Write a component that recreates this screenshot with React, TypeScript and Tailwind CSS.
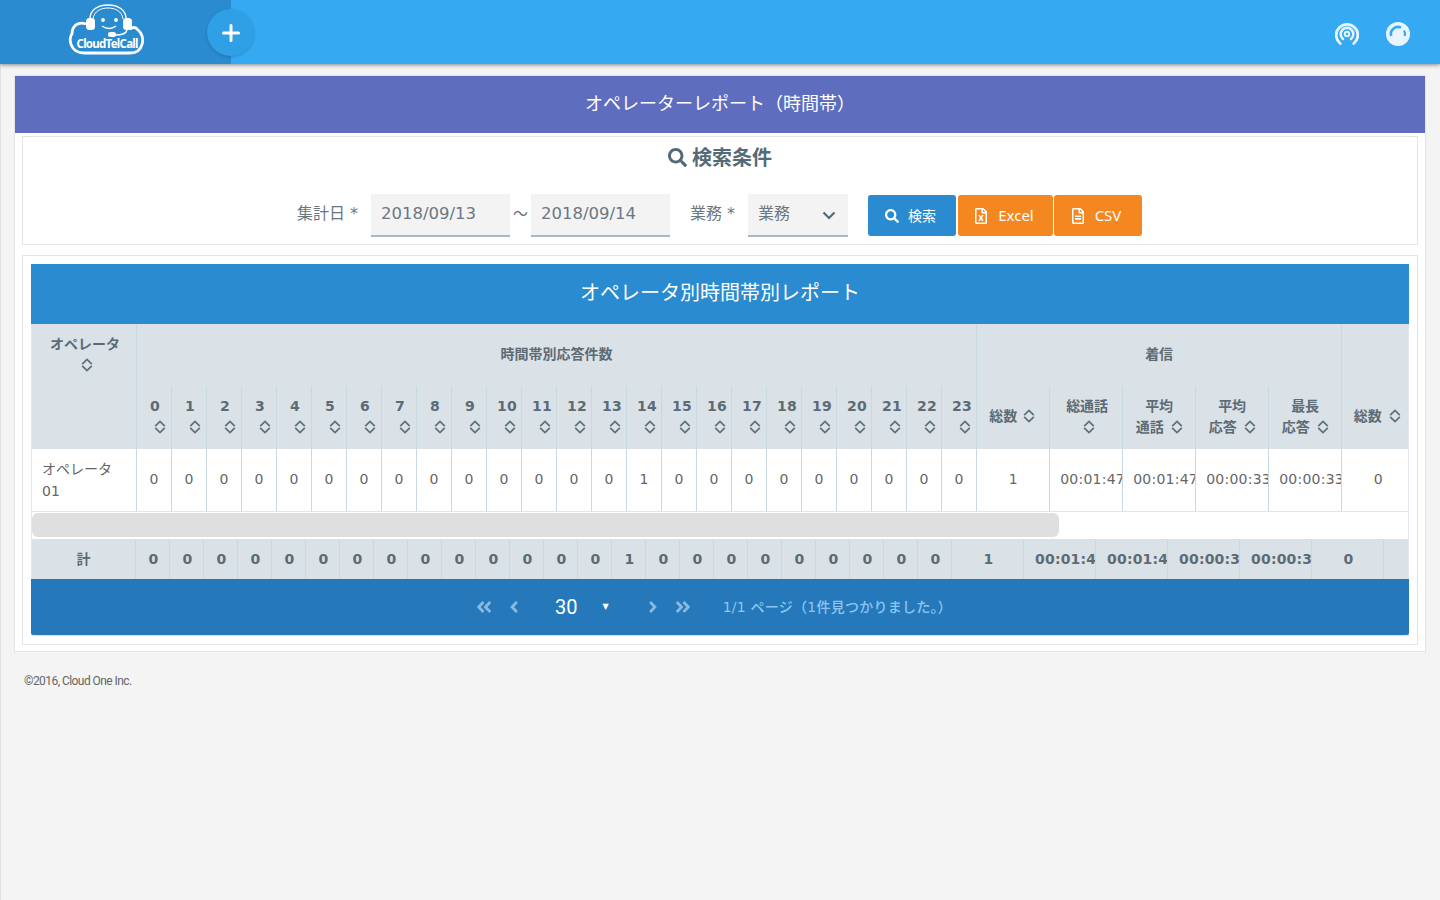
import React from 'react';
import { FaSearch, FaRegFileExcel, FaRegFileAlt, FaAngleDoubleLeft, FaAngleLeft, FaAngleRight, FaAngleDoubleRight } from 'react-icons/fa';

const cjk = "[font-family:'DejaVu_Sans','Noto_Sans_CJK_JP',sans-serif]";

function Sort({ className = '' }: { className?: string }) {
  return (
    <svg viewBox="0 0 12 14" className={`inline-block w-[12px] h-[14px] align-[-2px] ${className}`} fill="none" stroke="#5e707c" strokeWidth="1.8">
      <path d="M1.2 6.2 L6 1.4 L10.8 6.2" />
      <path d="M1.2 7.8 L6 12.6 L10.8 7.8" />
    </svg>
  );
}

function Logo() {
  return (
    <svg viewBox="0 0 86 60" className="w-[86px] h-[60px]" fill="none">
      <path d="M22 24 C14 21 8 26 8 34 C4 38 6 53 20 53 L66 53 C80 53 82 36 74 30 C72 27 69 27 66 29" stroke="#fff" strokeWidth="2.8" />
      <path d="M26 19 C26 9 35 5 44 5 C53 5 62 9 62 19" stroke="#fff" strokeWidth="1.5" />
      <path d="M29 19 C30 11 37 8 44 8 C51 8 58 11 59 19" stroke="#fff" strokeWidth="1" />
      <rect x="22" y="18" width="9" height="12" rx="3.5" fill="#fff" />
      <rect x="59" y="18" width="9" height="12" rx="3.5" fill="#fff" />
      <circle cx="39" cy="20" r="1.9" fill="#fff" />
      <circle cx="52" cy="20" r="1.9" fill="#fff" />
      <path d="M38 26 Q45 31 52 26" stroke="#fff" strokeWidth="1.4" />
      <path d="M63 30 Q62 35 51 35" stroke="#fff" strokeWidth="1.4" />
      <rect x="44" y="32" width="8" height="5" rx="2.2" fill="#fff" />
      <text x="43.5" y="48" textAnchor="middle" fill="#fff" fontSize="11.5" fontWeight="700" fontFamily="'Noto Sans', sans-serif" textLength="62">CloudTelCall</text>
    </svg>
  );
}

const hours = Array.from({ length: 24 }, (_, i) => i);
const rowVals = hours.map((h) => (h === 14 ? 1 : 0));
const bd = 'border-r border-[#c9d9e1]';
const num = 'font-bold tracking-[0.2px]';
const times = ['00:01:47', '00:01:47', '00:00:33', '00:00:33'];
const fieldBox = 'h-[43px] bg-[#f3f3f3] border-b-[2px] border-[#a9b8c5] flex items-center';

export default function App() {
  return (
    <div className={`min-h-[900px] bg-[#f4f4f4] border-l border-[#e2e2e2] ${cjk} text-[#666]`}>
      <header className="h-[64px] bg-[#35a9f2] flex items-stretch shadow-[0_1px_4px_rgba(0,0,0,0.45)] relative -ml-px">
        <div className="w-[231px] bg-[#2a8bd0] relative flex pl-[64px]">
          <Logo />
          <div className="absolute left-[207px] top-[9px] w-[47px] h-[47px] rounded-full bg-[#2f9fe6] shadow-[0_1px_3px_rgba(0,0,0,0.18)] flex items-center justify-center">
            <svg viewBox="0 0 18 18" className="w-[18px] h-[18px]" stroke="#fff" strokeWidth="3" strokeLinecap="round">
              <path d="M9 1.5V16.5M1.5 9H16.5" />
            </svg>
          </div>
        </div>
        <div className="ml-auto flex items-center gap-[27px] pr-[30px] pt-[3px]">
          <svg viewBox="0 0 24 24" className="w-[24px] h-[24px]" fill="none" stroke="#e8f5fe">
            <path d="M5.2 21.5 A10.8 10.8 0 1 1 18.8 21.5" strokeWidth="2.8" strokeLinecap="round" />
            <path d="M8 17 A6.3 6.3 0 1 1 16 17" strokeWidth="2.5" strokeLinecap="round" />
            <circle cx="12" cy="12" r="2.2" strokeWidth="2" />
          </svg>
          <svg viewBox="0 0 24 24" className="w-[24px] h-[24px]">
            <circle cx="12" cy="12" r="12" fill="#e8f5fe" />
            <path d="M5.2 14 A7 7 0 0 1 15 5.7" fill="none" stroke="#35a9f2" strokeWidth="2.6" />
            <path d="M18 8.5 A7 7 0 0 1 18.8 14" fill="none" stroke="#35a9f2" strokeWidth="2.2" />
          </svg>
        </div>
      </header>

      <main className="ml-[13px] mr-[14px] mt-[11px] border border-[#e2e4e6] bg-white pb-[6px]">
        <div className="h-[57px] pb-[2px] bg-[#5f6dbf] text-white text-[18px] flex items-center justify-center">オペレーターレポート（時間帯）</div>

        <section className="mx-[7px] mt-[3px] h-[109px] border border-[#e2e4e6]">
          <div className="flex items-center justify-center gap-[5px] h-[42px] pb-[1px] text-[#546a76] text-[20px] font-bold">
            <FaSearch className="w-[19px] h-[19px]" />
            <span>検索条件</span>
          </div>
          <div className="flex items-center mt-[15px] pl-[274px] text-[16px] text-[#6b7780]">
            <span className="w-[74px] whitespace-pre pb-[3px]">集計日 *</span>
            <div className={`${fieldBox} w-[139px] pl-[10px] pb-[1px] text-[#6a7883] text-[16.5px]`}>2018/09/13</div>
            <span className="w-[21px] text-center pb-[3px] text-[15px]">～</span>
            <div className={`${fieldBox} w-[139px] pl-[10px] pb-[1px] text-[#6a7883] text-[16.5px]`}>2018/09/14</div>
            <span className="w-[58px] ml-[20px] whitespace-pre pb-[3px]">業務 *</span>
            <div className={`${fieldBox} w-[100px] pl-[10px] pr-[12px] justify-between pb-[3px]`}>
              <span className="pt-px">業務</span>
              <svg viewBox="0 0 14 9" className="w-[14px] h-[9px] mt-[4px]" fill="none" stroke="#546a76" strokeWidth="2.2">
                <path d="M1.5 1.5 L7 7 L12.5 1.5" />
              </svg>
            </div>
            <div className="flex ml-[20px] text-white text-[14px] gap-[2px] font-['Noto_Sans','Noto_Sans_CJK_JP',sans-serif]">
              <button className="w-[88px] h-[41px] bg-[#2a8bd0] rounded-[3px] flex items-center justify-center gap-[9px] pr-[3px]"><FaSearch className="w-[14px] h-[14px]" />検索</button>
              <button className="w-[95px] h-[41px] bg-[#f58720] rounded-[3px] flex items-center justify-center gap-[10px] pr-[3px] text-[15px]"><FaRegFileExcel className="w-[14px] h-[16px]" />Excel</button>
              <button className="w-[88px] h-[41px] bg-[#f58720] rounded-[3px] flex items-center justify-center gap-[10px] pr-[4px] -ml-px text-[15px]"><FaRegFileAlt className="w-[14px] h-[16px]" />CSV</button>
            </div>
          </div>
        </section>

        <section className="mx-[7px] mt-[10px] border border-[#e2e4e6] px-[8px] pt-[8px] pb-[8px]">
          <div className="border border-[#dfe5ea] border-t-0 rounded-[2px]">
            <div className="h-[60px] pb-[2px] bg-[#2a8bd0] text-white text-[20px] flex items-center justify-center -mx-px">オペレータ別時間帯別レポート</div>

            <div className="overflow-hidden">
              <table className="table-fixed w-[1378px] border-separate border-spacing-0 text-[14px]">
                <colgroup>
                  <col className="w-[105px]" />
                  {hours.map((h) => <col key={h} className="w-[35px]" />)}
                  {[0, 1, 2, 3, 4].map((i) => <col key={i} className="w-[73px]" />)}
                  <col className="w-[68px]" />
                </colgroup>
                <thead className="bg-[#dae2e8] text-[#5d6b74]">
                  <tr className="h-[62px]">
                    <th rowSpan={2} className={`${bd} align-top pt-[10px] pl-[2px] font-bold leading-[21px]`}>オペレータ<br /><Sort className="ml-[3px]" /></th>
                    <th colSpan={24} className={`${bd} pb-[2px] font-bold`}>時間帯別応答件数</th>
                    <th colSpan={5} className={`${bd} pb-[2px] font-bold`}>着信</th>
                    <th />
                  </tr>
                  <tr className="h-[63px]">
                    {hours.map((h) => (
                      <th key={h} className={`${bd} ${h >= 10 ? 'pl-[10px] pr-[10px]' : 'pl-[11px] pr-[9px]'} pb-[2px] font-bold leading-[21px] whitespace-nowrap`}>
                        <span className={num}>{h}</span><br /><Sort className={h >= 10 ? 'ml-[7px]' : 'ml-[6px]'} />
                      </th>
                    ))}
                    <th className={`${bd} pb-[2px] pr-[2px] font-bold whitespace-nowrap`}>総数 <Sort className="ml-[1px]" /></th>
                    <th className={`${bd} pb-[2px] pl-[2px] font-bold leading-[21px]`}>総通話<br /><Sort className="ml-[3px]" /></th>
                    <th className={`${bd} pb-[2px] font-bold leading-[21px] whitespace-nowrap`}>平均<br />通話 <Sort className="ml-[2px]" /></th>
                    <th className={`${bd} pb-[2px] font-bold leading-[21px] whitespace-nowrap`}>平均<br />応答 <Sort className="ml-[2px]" /></th>
                    <th className={`${bd} pb-[2px] font-bold leading-[21px] whitespace-nowrap`}>最長<br />応答 <Sort className="ml-[2px]" /></th>
                    <th className="pb-[2px] pl-[2px] font-bold whitespace-nowrap">総数 <Sort className="ml-[2px]" /></th>
                  </tr>
                </thead>
                <tbody className="text-[#666]">
                  <tr className="h-[63px]">
                    <td className={`${bd} border-b border-b-[#dfe5ea] pl-[10px] pb-[1px] leading-[22px]`}>オペレータ<br />01</td>
                    {rowVals.map((v, i) => (
                      <td key={i} className={`${bd} border-b border-b-[#dfe5ea] pb-[2px] text-center`}>{v}</td>
                    ))}
                    <td className={`${bd} border-b border-b-[#dfe5ea] pb-[2px] text-center`}>1</td>
                    {times.map((t, i) => (
                      <td key={i} className={`${bd} border-b border-b-[#dfe5ea] pb-[2px] text-center pl-[10px] pr-[10px] tracking-[0.25px] overflow-hidden whitespace-nowrap`}>{t}</td>
                    ))}
                    <td className="border-b border-b-[#dfe5ea] pb-[2px] pl-[4px] text-center">0</td>
                  </tr>
                </tbody>
              </table>

              <div className="h-[27px] pt-px">
                <div className="w-[1027px] h-[24px] rounded-[6px] bg-[#dfdfdf]" />
              </div>

              <table className="table-fixed w-[1378px] border-separate border-spacing-0 text-[14px] bg-[#dae2e8] text-[#5d6b74] font-bold">
                <colgroup>
                  <col className="w-[104px]" />
                  {hours.map((h) => <col key={h} className="w-[34px]" />)}
                  {[0, 1, 2, 3, 4, 5].map((i) => <col key={i} className="w-[72px]" />)}
                  <col />
                </colgroup>
                <tbody>
                  <tr className="h-[40px]">
                    <td className={`${bd} text-center`}>計</td>
                    {rowVals.map((v, i) => <td key={i} className={`${bd} text-center pl-[2px] ${num}`}>{v}</td>)}
                    <td className={`${bd} text-center pl-[2px] ${num}`}>1</td>
                    {times.map((t, i) => (
                      <td key={i} className={`${bd} text-center px-[11px] overflow-hidden whitespace-nowrap ${num}`}>{t}</td>
                    ))}
                    <td className={`${bd} text-center pl-[2px] ${num}`}>0</td>
                    <td />
                  </tr>
                </tbody>
              </table>
            </div>

            <div className="h-[56px] bg-[#2579bb] -mx-px rounded-b-[2px] flex items-center pl-[444px]">
              <FaAngleDoubleLeft className="w-[18px] h-[18px] text-[#8fb9dc]" />
              <FaAngleLeft className="w-[18px] h-[18px] text-[#8fb9dc] ml-[12px]" />
              <span className="ml-[32px] text-white text-[20px] font-['Roboto',sans-serif]">30</span>
              <span className="ml-[25px] text-white text-[8px]">▼</span>
              <FaAngleRight className="w-[18px] h-[18px] text-[#8fb9dc] ml-[35px]" />
              <FaAngleDoubleRight className="w-[18px] h-[18px] text-[#8fb9dc] ml-[12px]" />
              <span className="ml-[31px] text-[14px] text-[#8cc6f0] font-medium tracking-[0.25px] whitespace-nowrap">1/1 ページ（1件見つかりました。）</span>
            </div>
          </div>
        </section>
      </main>

      <footer className="mt-[20px] ml-[23px] text-[12px] text-[#666] font-['Roboto',sans-serif] tracking-[-0.55px]">©2016, Cloud One Inc.</footer>
    </div>
  );
}
